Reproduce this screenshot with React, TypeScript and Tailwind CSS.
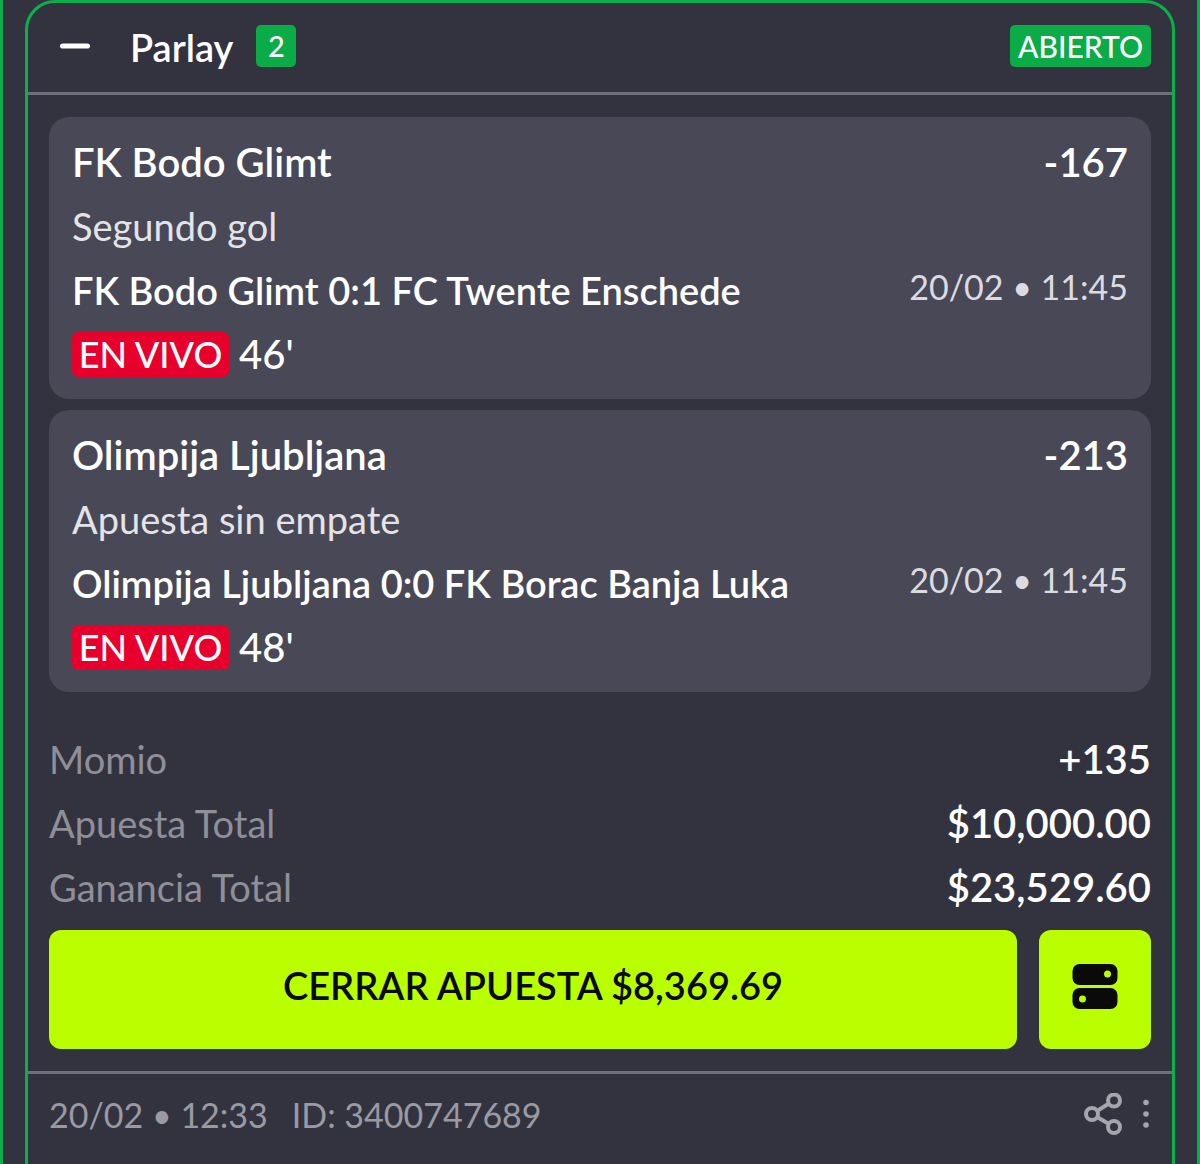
import { Minus } from 'lucide-react';

const legs = [
  { team: 'FK Bodo Glimt', odds: '-167', market: 'Segundo gol', home: 'FK Bodo Glimt', score: '0:1', away: 'FC Twente Enschede', minute: "46'" },
  { team: 'Olimpija Ljubljana', odds: '-213', market: 'Apuesta sin empate', home: 'Olimpija Ljubljana', score: '0:0', away: 'FK Borac Banja Luka', minute: "48'" },
];

const totals = [
  { label: 'Momio', value: '+135' },
  { label: 'Apuesta Total', value: '$10,000.00' },
  { label: 'Ganancia Total', value: '$23,529.60' },
];

function LegCard({ leg }: { leg: (typeof legs)[number] }) {
  return (
    <div className="bg-[#484856] rounded-[20px] px-[23px] pt-[13px] h-[282px] text-white">
      <div className="flex justify-between items-center h-[64px] text-[40px] font-semibold">
        <span>{leg.team}</span>
        <span>{leg.odds}</span>
      </div>
      <div className="flex items-center h-[64px] text-[38px] text-[#e4e4e8]">{leg.market}</div>
      <div className="flex justify-between items-center h-[64px]">
        <span className="text-[38px] font-semibold whitespace-pre">{leg.home} {leg.score} {leg.away}</span>
        <span className="text-[34px] text-[#dcdce0] -mt-[8px]">20/02 • 11:45</span>
      </div>
      <div className="flex items-center gap-[10px] h-[64px]">
        <span className="bg-[#e8002d] rounded-[6px] h-[45px] w-[157px] flex items-center justify-center text-[36px] font-medium">EN VIVO</span>
        <span className="text-[40px] font-medium">{leg.minute}</span>
      </div>
    </div>
  );
}

export default function App() {
  return (
    <div className="h-[1164px] overflow-hidden bg-[#333340] border-x-[3px] border-[#0bb04a] px-[22px]" style={{ fontFamily: 'Lato, sans-serif' }}>
      <div className="h-[1200px] rounded-[30px] border-[3px] border-[#0bb04a]">
        <div className="flex items-center justify-between h-[89px] border-b-0 pl-[29px] pr-[21px]">
          <div className="flex items-center">
            <Minus size={36} strokeWidth={3.4} className="text-white -mt-[3px] scale-x-[1.15]" />
            <span className="ml-[37px] text-[38px] font-semibold text-white leading-none -mt-[1px]">Parlay</span>
            <span className="ml-[23px] w-[40px] h-[42px] -mt-[3px] rounded-[5px] bg-[#0bab47] text-white text-[29px] font-medium flex items-center justify-center">2</span>
          </div>
          <span className="h-[42px] w-[141px] -mt-[3px] rounded-[5px] bg-[#0bab47] text-white text-[30px] font-medium flex items-center justify-center">ABIERTO</span>
        </div>
        <div className="h-[3px] bg-[#6f6f7b]" />

        <div className="px-[21px] pt-[22px] flex flex-col gap-[11px]">
          {legs.map((leg) => (
            <LegCard key={leg.team} leg={leg} />
          ))}
        </div>

        <div className="px-[21px] pt-[35px]">
          {totals.map((row) => (
            <div key={row.label} className="flex justify-between items-center h-[64px]">
              <span className="text-[38px] text-[#8f8f99]">{row.label}</span>
              <span className="text-[40px] font-semibold text-white">{row.value}</span>
            </div>
          ))}
          <div className="flex gap-[22px] mt-[11px]">
            <button className="flex-1 h-[119px] rounded-[12px] bg-[#baff00] text-[#0a0a0a] text-[38px] font-semibold pb-[9px]">CERRAR APUESTA $8,369.69</button>
            <button className="w-[112px] h-[119px] rounded-[12px] bg-[#baff00] flex items-center justify-center pb-[7px]">
              <svg width="46" height="46" viewBox="0 0 46 46">
                <rect x="0.5" y="1" width="45" height="21" rx="7" fill="#0a0a0a" />
                <rect x="0.5" y="25" width="45" height="21" rx="7" fill="#0a0a0a" />
                <circle cx="35.5" cy="11" r="3.5" fill="#baff00" />
                <circle cx="10.5" cy="36" r="3.5" fill="#baff00" />
              </svg>
            </button>
          </div>
        </div>

        <div className="h-[3px] bg-[#6f6f7b] mt-[22px]" />

        <div className="flex justify-between items-center h-[80px] pl-[21px] pr-[23px] text-[#9a9aa3] text-[34px]">
          <div className="flex gap-[24px]">
            <span>20/02 • 12:33</span>
            <span>ID: 3400747689</span>
          </div>
          <div className="flex items-center gap-[19px]">
            <svg width="40" height="42" viewBox="0 0 40 42" fill="none" stroke="#a5a5ae" strokeWidth="4">
              <circle cx="8" cy="21" r="6" />
              <circle cx="30" cy="7.5" r="6" />
              <circle cx="30" cy="34" r="6" />
              <path d="M13 18 L25 10.5 M13 24 L25 31" />
            </svg>
            <svg width="6" height="30" viewBox="0 0 6 30" fill="#a5a5ae">
              <circle cx="3" cy="3.5" r="2.8" />
              <circle cx="3" cy="15" r="2.8" />
              <circle cx="3" cy="26" r="2.8" />
            </svg>
          </div>
        </div>
      </div>
    </div>
  );
}
